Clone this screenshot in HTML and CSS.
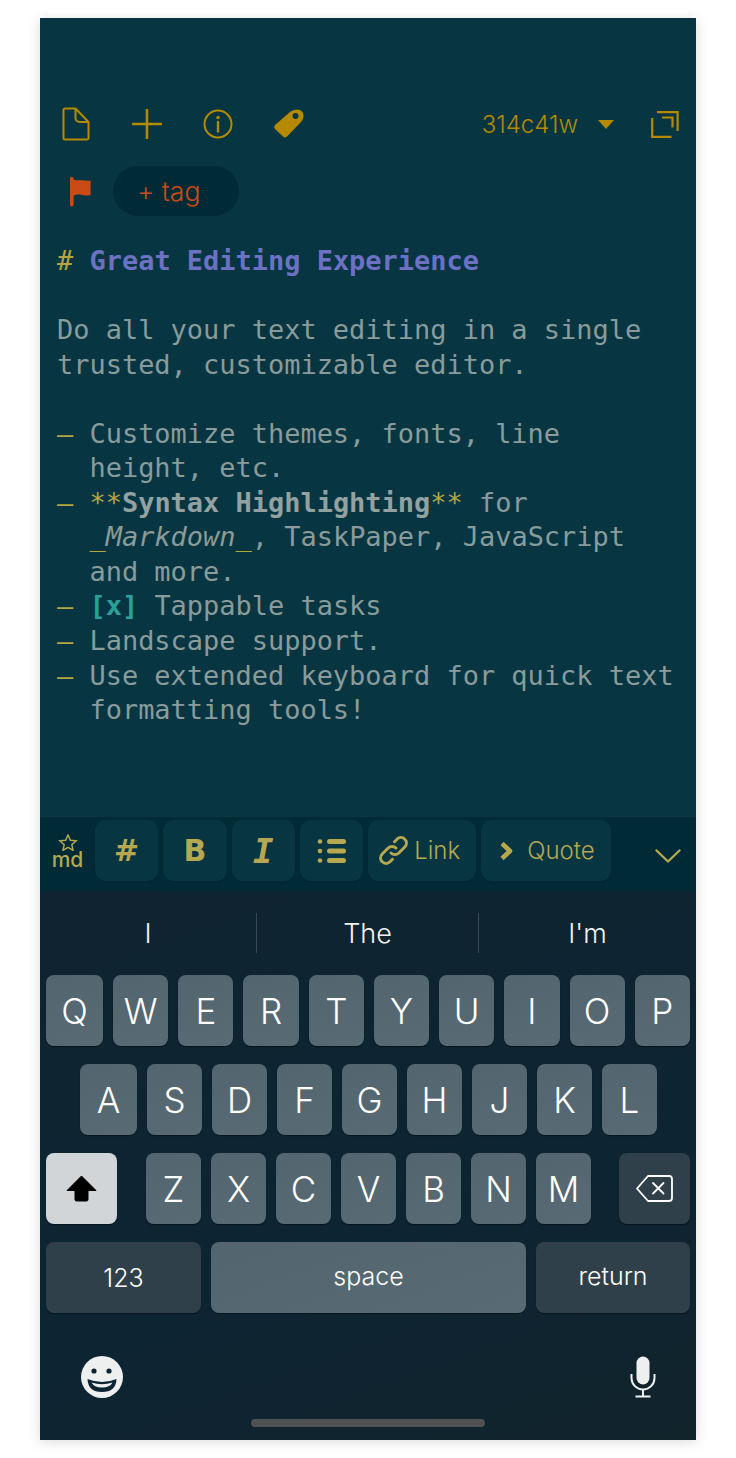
FILE: index.html
```html
<!DOCTYPE html>
<html lang="en">
<head>
  <meta charset="UTF-8" />
  <meta name="viewport" content="width=device-width, initial-scale=1.0" />
  <title>Great Editing Experience</title>
  <link rel="stylesheet" href="styles.css">
</head>
<body>
  <div class="phone">
    <div class="editor">
      <div class="top-bar">
        <svg class="icon" width="29" height="34" viewBox="0 0 29 34"><path d="M3 1.500h10.500l13 13.500v16a1.500 1.500 0 0 1-1.500 1.500h-22a1.500 1.500 0 0 1-1.500-1.500v-28a1.500 1.500 0 0 1 1.500-1.500zM13.500 1.500v9.500a4 4 0 0 0 4 4h9" fill="none" stroke="#b58900" stroke-width="2" stroke-linejoin="round"/></svg>
        <svg class="icon" width="30" height="30" viewBox="0 0 30 30"><path d="M15 1v28M1 15h28" fill="none" stroke="#b58900" stroke-width="2.600" stroke-linecap="round"/></svg>
        <svg class="icon" width="30" height="30" viewBox="0 0 30 30"><circle cx="15" cy="15" r="13.500" fill="none" stroke="#b58900" stroke-width="2"/><circle cx="15" cy="8.500" r="1.700" fill="#b58900"/><path d="M15 13v9.500" stroke="#b58900" stroke-width="2.400" stroke-linecap="round"/></svg>
        <svg class="icon" width="30" height="30" viewBox="0 0 30 30"><path d="M1 16L16 3Q19 .5 23 .5Q29.500 .5 29.500 7Q29.500 10.500 27 13L13 27.500Q11 29.500 9 27.500L1 20Q-.5 18 1 16z" fill="#b58900"/><circle cx="21.500" cy="7" r="3" fill="#073642"/></svg>
        <span class="version">314c41w</span>
        <svg class="icon caret" width="16" height="9" viewBox="0 0 16 9"><path d="M0 0h16l-8 9z" fill="#b58900"/></svg>
        <svg class="icon expand" width="28" height="27" viewBox="0 0 28 27"><path d="M6 1.100H26.600V20M11 6.500H21.500V16.500M1.200 7V25.900H20.500" fill="none" stroke="#b58900" stroke-width="2.200"/></svg>
      </div>
      <div class="tag-row">
        <svg class="flag" width="23" height="31" viewBox="0 0 23 31"><path d="M1 2.500a1.800 1.800 0 0 1 3.600 0v1c4 1.500 6 .5 9 .7 3 .2 5 .6 8 .4v14.500c-3 .6-5 .4-8.500-.2-3-.5-5.500-.5-8.500.5v9.200a1.800 1.800 0 0 1-3.600 0z" fill="#cb4b16"/></svg>
        <div class="tag-pill">+ tag</div>
      </div>
      <div class="note">
        <div class="line"><span class="mark"># </span><span class="heading">Great Editing Experience</span></div>
        <div class="line"></div>
        <div class="line">Do all your text editing in a single</div>
        <div class="line">trusted, customizable editor.</div>
        <div class="line"></div>
        <div class="line"><span class="mark">–</span> Customize themes, fonts, line</div>
        <div class="line">  height, etc.</div>
        <div class="line"><span class="mark">–</span> <span class="mark">**</span><b>Syntax Highlighting</b><span class="mark">**</span> for</div>
        <div class="line">  <span class="mark">_</span><i>Markdown</i><span class="mark">_</span>, TaskPaper, JavaScript</div>
        <div class="line">  and more.</div>
        <div class="line"><span class="mark">–</span> <b class="task">[x]</b> Tappable tasks</div>
        <div class="line"><span class="mark">–</span> Landscape support.</div>
        <div class="line"><span class="mark">–</span> Use extended keyboard for quick text</div>
        <div class="line">  formatting tools!</div>
      </div>
    </div>

    <div class="toolbar">
      <div class="md-logo">
        <svg width="20" height="17" viewBox="0 0 20 18"><path d="M10 1l2.500 5.700 6.200.6-4.700 4.100 1.400 6-5.400-3.200-5.400 3.200 1.400-6-4.700-4.100 6.200-.6z" fill="none" stroke="#b5a850" stroke-width="1.500"/></svg>
        <span>md</span>
      </div>
      <div class="tool square hash">#</div>
      <div class="tool square bold">B</div>
      <div class="tool square ital">I</div>
      <div class="tool square">
        <svg width="30" height="26" viewBox="0 0 30 26"><g fill="#b5a850"><circle cx="3" cy="3.500" r="2.300"/><circle cx="3" cy="13" r="2.300"/><circle cx="3" cy="22.500" r="2.300"/><rect x="10" y="1" width="19" height="5" rx="2.500"/><rect x="10" y="10.500" width="19" height="5" rx="2.500"/><rect x="10" y="20" width="19" height="5" rx="2.500"/></g></svg>
      </div>
      <div class="tool link">
        <svg width="29" height="29" viewBox="0 0 29 29"><g fill="none" stroke="#b5a850" stroke-width="3" stroke-linecap="round"><path d="M12 17a5.500 5.500 0 0 0 7.800 0l6-6a5.500 5.500 0 0 0-7.800-7.800l-2.500 2.500"/><path d="M17 12a5.500 5.500 0 0 0-7.800 0l-6 6a5.500 5.500 0 0 0 7.800 7.800l2.500-2.500"/></g></svg>
        <span>Link</span>
      </div>
      <div class="tool quote">
        <svg width="14" height="20" viewBox="0 0 14 20"><path d="M2 2.500l8 7.500-8 7.500" fill="none" stroke="#b5a850" stroke-width="4.600" stroke-linejoin="round"/></svg>
        <span>Quote</span>
      </div>
      <svg class="collapse" width="26" height="14" viewBox="0 0 26 14"><path d="M1.500 1.500l11.500 11 11.500-11" fill="none" stroke="#b5a850" stroke-width="2.400" stroke-linecap="round" stroke-linejoin="round"/></svg>
    </div>

    <div class="keyboard">
      <div class="suggestions">
        <div class="word first">I</div>
        <div class="word middle">The</div>
        <div class="word last">I'm</div>
      </div>
      <div class="key-row">
        <div class="key wide">Q</div><div class="key">W</div><div class="key">E</div><div class="key">R</div><div class="key">T</div><div class="key">Y</div><div class="key">U</div><div class="key">I</div><div class="key">O</div><div class="key">P</div>
      </div>
      <div class="key-row row-two">
        <div class="key wide">A</div><div class="key">S</div><div class="key">D</div><div class="key">F</div><div class="key">G</div><div class="key">H</div><div class="key">J</div><div class="key">K</div><div class="key">L</div>
      </div>
      <div class="key-row row-three">
        <div class="key shift">
          <svg width="31" height="27" viewBox="0 0 31 27"><path d="M15.500 1l14.500 14.500h-8v9a1.500 1.500 0 0 1-1.500 1.500h-10a1.500 1.500 0 0 1-1.500-1.500v-9h-8z" fill="#000" stroke="#000" stroke-linejoin="round"/></svg>
        </div>
        <div class="letters">
          <div class="key">Z</div><div class="key">X</div><div class="key">C</div><div class="key">V</div><div class="key">B</div><div class="key">N</div><div class="key">M</div>
        </div>
        <div class="key dark back">
          <svg width="37" height="27" viewBox="0 0 37 27"><path d="M12 1h21a3 3 0 0 1 3 3v19a3 3 0 0 1-3 3h-21l-11-12.500z" fill="none" stroke="#fff" stroke-width="1.800" stroke-linejoin="round"/><path d="M17 8l10.500 10.500M27.500 8l-10.500 10.500" stroke="#fff" stroke-width="1.800" stroke-linecap="round"/></svg>
        </div>
      </div>
      <div class="key-row row-four">
        <div class="key dark small num">123</div>
        <div class="key small space">space</div>
        <div class="key dark small ret">return</div>
      </div>
      <div class="bottom-row">
        <svg width="42" height="42" viewBox="0 0 42 42"><circle cx="21" cy="21" r="21" fill="#eef0f0"/><circle cx="13" cy="15" r="2.600" fill="#0d2432"/><circle cx="28" cy="15" r="2.600" fill="#0d2432"/><path d="M6.500 23Q21 29 35.500 23Q35 36 21 36Q7 36 6.500 23z" fill="#0d2432"/><path d="M10.500 26.500Q21 30 31.500 26.500Q29 31.500 21 31.500Q13 31.500 10.500 26.500z" fill="#eef0f0"/></svg>
        <svg width="26" height="42" viewBox="0 0 26 42"><rect x="6.500" y="0.500" width="13" height="28" rx="6.500" fill="#eef0f0"/><path d="M1.500 18v4a11.500 11.500 0 0 0 23 0v-4M13 33.500v7M5.500 40.500h15" fill="none" stroke="#eef0f0" stroke-width="2"/></svg>
      </div>
      <div class="home-bar"></div>
    </div>
  </div>
</body>
</html>
```

FILE: styles.css
```css
* {
  box-sizing: border-box;
}

html, body {
  margin: 0;
  padding: 0;
  background: #fff;
}

body {
  padding: 18px 40px;
  width: 736px;
  height: 1458px;
  overflow: hidden;
}

.phone {
  width: 656px;
  height: 1422px;
  display: flex;
  flex-direction: column;
  box-shadow: 0 2px 12px rgba(0,0,0,0.14);
  font-family: "Inter", "Liberation Sans", sans-serif;
}

.editor {
  height: 799px;
  background: #073642;
  padding-top: 89px;
}

.top-bar {
  display: flex;
  align-items: center;
  gap: 41px;
  height: 34px;
  padding: 0 17px 0 22px;
}

.icon {
  flex: none;
}

.version {
  margin-left: auto;
  margin-right: -21px;
  font-size: 24px;
  font-weight: 350;
  color: #b58900;
}

.expand {
  margin-left: -4px;
}

.tag-row {
  display: flex;
  align-items: center;
  gap: 21px;
  margin-top: 25px;
  padding-left: 29px;
}

.tag-pill {
  width: 126px;
  height: 50px;
  line-height: 50px;
  padding-left: 24px;
  border-radius: 25px;
  background: #002b36;
  color: #cb4b16;
  font-size: 26.5px;
  font-weight: 350;
}

.note {
  margin-top: 28px;
  padding-left: 17px;
  font-family: "DejaVu Sans Mono", monospace;
  font-size: 26.96px;
  color: #8a9b9b;
}

.line {
  height: 34.55px;
  line-height: 34.55px;
  white-space: pre;
}

.note b {
  color: #93a1a1;
}

.mark {
  color: #b5a642;
}

.heading {
  color: #6c71c4;
  font-weight: bold;
}

.note .task {
  color: #2aa198;
}

.toolbar {
  height: 74px;
  display: flex;
  align-items: flex-start;
  gap: 5px;
  padding: 3px 0 0 12px;
  background: #002b36;
  color: #b5a850;
}

.md-logo {
  width: 38px;
  display: flex;
  flex-direction: column;
  align-items: center;
  padding: 14px 7px 0 0;
  font-size: 21px;
  line-height: 17px;
  font-weight: 500;
}

.md-logo svg {
  display: block;
}

.tool {
  height: 61px;
  border-radius: 11px;
  background: #073642;
  display: flex;
  align-items: center;
  font-size: 24px;
  font-weight: 300;
  box-shadow: 0 1px 2px rgba(0,0,0,0.15);
}

.square {
  width: 63.3px;
  justify-content: center;
}

.hash {
  font-family: "DejaVu Sans", sans-serif;
  font-weight: bold;
  font-size: 30px;
}

.bold {
  font-family: "DejaVu Sans", sans-serif;
  font-weight: bold;
  font-size: 30px;
}

.ital {
  font-family: "DejaVu Sans Mono", monospace;
  font-weight: bold;
  font-style: italic;
  font-size: 34px;
}

.link {
  width: 108px;
  padding-left: 11px;
  gap: 6px;
}

.quote {
  width: 129.500px;
  padding-left: 19px;
  gap: 13px;
}

.collapse {
  margin: 29px 0 0 39px;
}

.keyboard {
  flex: 1;
  background: linear-gradient(160deg, #0f2430, #0d2432 60%, #11242c);
  color: #fff;
  padding: 0 6px;
}

.suggestions {
  display: flex;
  height: 84px;
  margin: 0 -6px;
  padding: 22px 0;
  font-size: 27px;
  font-weight: 300;
  color: #f2f4f4;
}

.word {
  display: flex;
  align-items: center;
  justify-content: center;
}

.first {
  width: 216px;
}

.middle {
  width: 223px;
  border-left: 1px solid #3a4a53;
  border-right: 1px solid #3a4a53;
}

.last {
  flex: 1;
}

.key-row {
  display: flex;
  gap: 10px;
  height: 71px;
  margin-bottom: 18px;
}

.row-two {
  padding: 0 33px 0 34px;
}

.row-three {
  gap: 0;
  justify-content: space-between;
}

.letters {
  display: flex;
  gap: 10px;
  width: 445px;
  margin-left: 29px;
  margin-right: 28px;
}

.key {
  flex: 1;
  display: flex;
  align-items: center;
  justify-content: center;
  border-radius: 8px;
  background: linear-gradient(160deg, #53656e, #586a73);
  box-shadow: 0 1px 1px rgba(0,0,0,0.45);
  font-size: 35px;
  font-weight: 300;
}

.wide {
  flex: none;
  width: 57px;
}

.shift {
  flex: none;
  width: 71px;
  background: #d2d5d8;
}

.back {
  flex: none;
  width: 71px;
}

.dark {
  background: #30404a;
}

.small {
  font-size: 25px;
  font-weight: 300;
}

.row-four {
  gap: 10px;
  margin-bottom: 0;
}

.num {
  flex: none;
  width: 155px;
}

.space {
  flex: none;
  width: 315px;
  padding-bottom: 3px;
}

.ret {
  flex: none;
  width: 154px;
  padding-bottom: 3px;
}

.bottom-row {
  display: flex;
  justify-content: space-between;
  margin-top: 43px;
  padding: 0 34px 0 35px;
}

.bottom-row svg {
  display: block;
}

.home-bar {
  width: 234px;
  height: 8px;
  margin: 21px auto 0;
  border-radius: 4px;
  background: #4f5152;
}
```
